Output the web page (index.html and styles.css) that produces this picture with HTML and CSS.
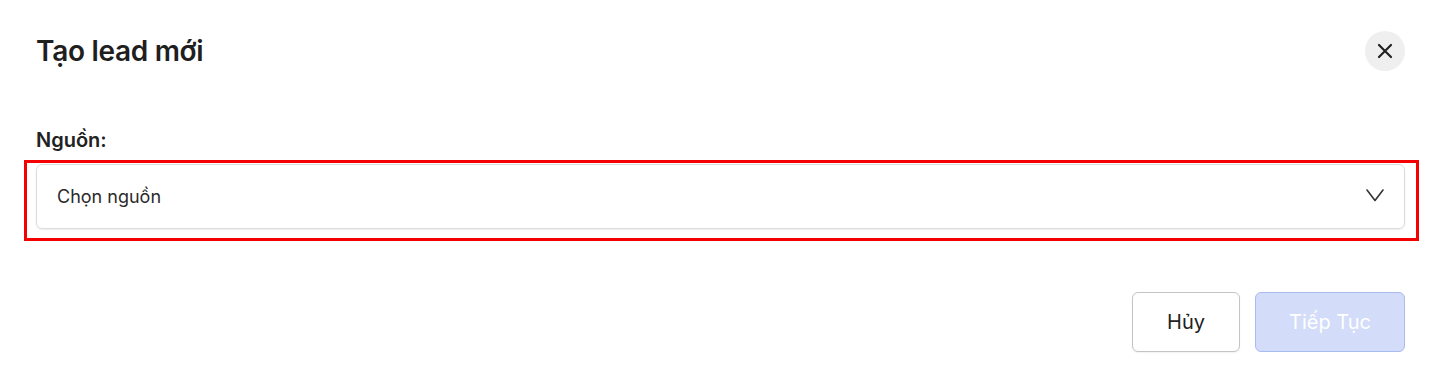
FILE: index.html
```html
<!DOCTYPE html>
<html lang="vi">
<head>
<meta charset="UTF-8">
<meta name="viewport" content="width=device-width, initial-scale=1.0">
<title>Tạo lead mới</title>
<link rel="stylesheet" href="styles.css">
</head>
<body>
<div class="modal">
<div class="modal-header">
<h1 class="modal-title">Tạo lead mới</h1>
<button class="close-btn" type="button" aria-label="Đóng">
<svg width="18" height="18" viewBox="0 0 18 18"><path d="M3 3L15 15M15 3L3 15" stroke="#222" stroke-width="2.2" stroke-linecap="round"/></svg>
</button>
</div>
<div class="form-group">
<label class="form-label">Nguồn:</label>
<div class="select-wrap">
<div class="select-box">
<span class="select-text">Chọn nguồn</span>
<svg class="chevron" width="20" height="15" viewBox="0 0 20 15"><path d="M2 2L10 12.5L18 2" fill="none" stroke="#333" stroke-width="1.6" stroke-linecap="round" stroke-linejoin="round"/></svg>
</div>
<div class="highlight"></div>
</div>
</div>
<div class="modal-footer">
<button class="btn btn-cancel" type="button">Hủy</button>
<button class="btn btn-next" type="button" disabled>Tiếp Tục</button>
</div>
</div>
</body>
</html>
```
FILE: styles.css
```css
* {
margin: 0;
padding: 0;
box-sizing: border-box;
font-family: Inter, 'Noto Sans', Arial, sans-serif;
}
body {
background: #fff;
color: #222;
}
.modal {
width: 1438px;
height: 381px;
padding: 28px 33px 0 36px;
}
.modal-header {
display: flex;
justify-content: space-between;
align-items: center;
height: 46px;
}
.modal-title {
font-size: 28px;
font-weight: 600;
color: #1f1f1f;
letter-spacing: -0.3px;
}
.close-btn {
width: 40px;
height: 40px;
border-radius: 50%;
border: none;
background: #efefef;
display: flex;
align-items: center;
justify-content: center;
margin-top: 0;
cursor: pointer;
}
.form-group {
margin-top: 54px;
}
.form-label {
display: block;
font-size: 20px;
font-weight: 600;
color: #222;
margin-bottom: 12px;
}
.select-wrap {
position: relative;
}
.select-box {
height: 65px;
border: 1px solid #dcdcdc;
border-radius: 6px;
box-shadow: 0 1px 2px rgba(0, 0, 0, 0.08);
display: flex;
align-items: center;
justify-content: space-between;
padding: 0 19px 0 20px;
}
.select-text {
font-size: 18px;
color: #2a2a2a;
}
.chevron {
margin-top: -2px;
}
.highlight {
position: absolute;
left: -12px;
right: -14px;
top: -4px;
bottom: -12px;
border: 3px solid #f50000;
pointer-events: none;
}
.modal-footer {
display: flex;
justify-content: flex-end;
gap: 15px;
margin-top: 63px;
}
.btn {
height: 60px;
border-radius: 6px;
font-size: 20px;
cursor: pointer;
}
.btn-cancel {
width: 108px;
background: #fff;
border: 1px solid #c4c4c4;
color: #222;
box-shadow: 0 1px 2px rgba(0, 0, 0, 0.06);
}
.btn-next {
width: 150px;
background: #d3dcf8;
border: 1px solid #a9bbf3;
color: #fff;
cursor: default;
}
```
